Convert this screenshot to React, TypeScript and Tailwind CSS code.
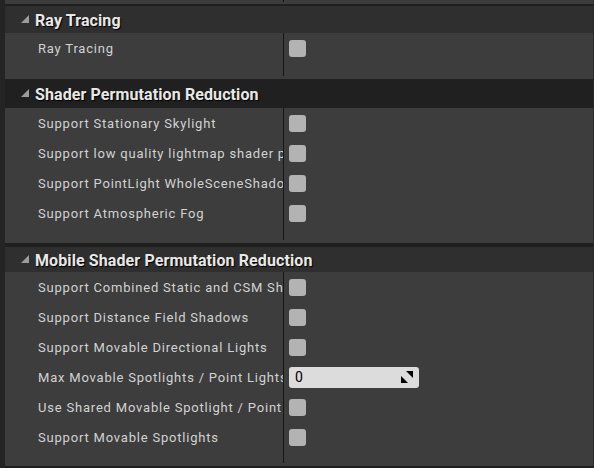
const sections = [
  {
    title: 'Ray Tracing',
    headerBg: 'bg-[#2f2f2f]',
    gap: 'h-[2px]',
    headerH: 'h-[27px]',
    pb: 'pb-[16px]',
    rows: [{ label: 'Ray Tracing' }],
  },
  {
    title: 'Shader Permutation Reduction',
    headerBg: 'bg-[#202020]',
    gap: 'h-0',
    headerH: 'h-[29px]',
    pb: 'pb-[15px]',
    rows: [
      { label: 'Support Stationary Skylight' },
      { label: 'Support low quality lightmap shader permutations' },
      { label: 'Support PointLight WholeSceneShadows' },
      { label: 'Support Atmospheric Fog' },
    ],
  },
  {
    title: 'Mobile Shader Permutation Reduction',
    headerBg: 'bg-[#2f2f2f]',
    gap: 'h-[4px]',
    headerH: 'h-[25px]',
    pb: 'pb-[14px]',
    rows: [
      { label: 'Support Combined Static and CSM Shadowing' },
      { label: 'Support Distance Field Shadows' },
      { label: 'Support Movable Directional Lights' },
      { label: 'Max Movable Spotlights / Point Lights', number: '0' },
      { label: 'Use Shared Movable Spotlight / Point Light Shadows' },
      { label: 'Support Movable Spotlights' },
    ],
  },
];

function Checkbox() {
  return <div className="w-[17px] h-[17px] rounded-[3px] bg-[#b3b3b3]" />;
}

function NumberBox({ value }: { value: string }) {
  return (
    <div className="w-[130px] h-[21px] rounded-[3px] bg-[#dcdcdc] flex items-center justify-between pl-[6px] pr-[6px]">
      <span className="text-[14px] text-black">{value}</span>
      <svg width="12" height="12" viewBox="0 0 12 12">
        <polygon points="5,0 12,0 12,7" fill="#000" />
        <polygon points="0,5 0,12 7,12" fill="#000" />
      </svg>
    </div>
  );
}

export default function App() {
  return (
    <div className="w-[594px] h-[468px] overflow-hidden flex bg-[#1f1f1f] font-['Roboto',sans-serif]">
      <div className="w-[5px] bg-[#242424]" />
      <div className="flex-1 flex flex-col">
        {/* tail of the previous category */}
        <div className="h-[4px] bg-[#3c3c3c] flex">
          <div className="w-[278px]" />
          <div className="w-px h-[2px] bg-[#161616]" />
        </div>

        {sections.map((s) => (
          <div key={s.title}>
            <div className={s.gap} />
            <div className={`${s.headerH} ${s.headerBg} flex items-center`}>
              <svg width="9" height="9" viewBox="0 0 9 9" className="ml-[16px] mr-[5px] mt-[-1px]">
                <polygon points="8,0 8,8 0,8" fill="#9c9c9c" />
              </svg>
              <span className="pt-[2px] text-[16px] font-bold tracking-[0.1px] text-[#e8e8e8] [text-shadow:1px_1px_1px_#000]">
                {s.title}
              </span>
            </div>
            <div className="bg-[#3d3d3d] flex">
              <div className={`w-[278px] flex flex-col ${s.pb}`}>
                {s.rows.map((r) => (
                  <div key={r.label} className="h-[30px] flex items-center pt-[2px] pl-[33px] overflow-hidden whitespace-nowrap">
                    <span className="text-[13px] text-[#d2d2d2] tracking-[0.8px]">{r.label}</span>
                  </div>
                ))}
              </div>
              <div className="w-px bg-[#161616] mb-[3px]" />
              <div className="flex-1 flex flex-col pl-[5px]">
                {s.rows.map((r) => (
                  <div key={r.label} className="h-[30px] flex items-center">
                    {r.number ? <NumberBox value={r.number} /> : <Checkbox />}
                  </div>
                ))}
              </div>
            </div>
          </div>
        ))}
        <div className="flex-1" />
      </div>
      <div className="w-px bg-[#2a2a2a]" />
    </div>
  );
}
